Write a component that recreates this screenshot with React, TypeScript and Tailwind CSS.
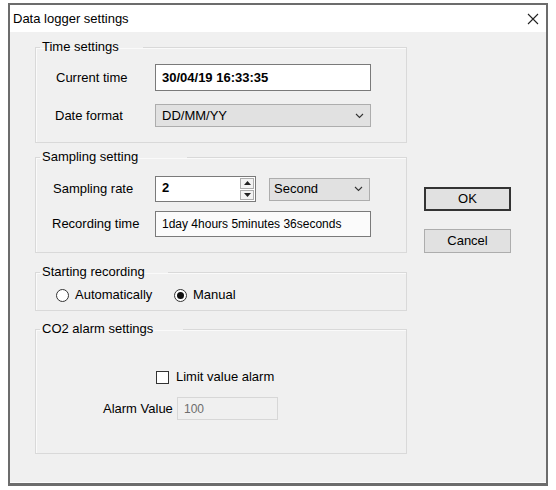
import React from 'react'

const font = { fontFamily: '"Liberation Sans", Arial, sans-serif' }

function Group({ title, legendW, className, children }: { title: string; legendW: string; className?: string; children: React.ReactNode }) {
  return (
    <fieldset className={`w-[372px] border border-[#d9d9d9] shadow-[inset_1px_1px_0_#fafafa] ${className ?? ''}`}>
      <legend className={`ml-[4px] pl-[2px] text-[13px] leading-[16px] text-black ${legendW}`}>{title}</legend>
      {children}
    </fieldset>
  )
}

function Chevron() {
  return (
    <svg width="9" height="6" viewBox="0 0 9 6" className="shrink-0">
      <polyline points="1,1 4.5,4.5 8,1" fill="none" stroke="#333" strokeWidth="1.1" />
    </svg>
  )
}

function Radio({ checked, label, className }: { checked?: boolean; label: string; className?: string }) {
  return (
    <div className={`flex items-center gap-[6px] ${className ?? ''}`}>
      <div className="w-[13px] h-[13px] rounded-full border border-[#333] bg-white flex items-center justify-center">
        {checked && <div className="w-[7px] h-[7px] rounded-full bg-[#111]" />}
      </div>
      <span className="text-[13px]">{label}</span>
    </div>
  )
}

export default function App() {
  return (
    <div className="w-[556px] h-[490px] bg-white pt-[3px] pl-[8px] text-black" style={font}>
      <div className="w-[540px] h-[483px] border-2 border-b-[3px] border-[#6c6c6c] flex flex-col">
        {/* title bar */}
        <div className="h-[27px] bg-white flex items-center justify-between pl-[3px] pr-[7px] shrink-0">
          <span className="text-[13px]">Data logger settings</span>
          <svg width="12" height="12" viewBox="0 0 12 12">
            <path d="M1 1 L11 11 M11 1 L1 11" stroke="#222" strokeWidth="1.1" />
          </svg>
        </div>

        {/* body */}
        <div className="flex-1 bg-[#f0f0f0] flex pl-[25px] pt-[7px] border-b border-[#fbfbfb]">
          <div className="flex flex-col">
            <Group title="Time settings" legendW="w-[103px]">
              <div className="flex flex-col pt-[9px] pb-[15px]">
                <div className="flex items-center">
                  <span className="w-[119px] pl-[20px] text-[13px]">Current time</span>
                  <div className="w-[216px] h-[27px] border border-[#7a7a7a] bg-white flex items-center pl-[6px] text-[13px] font-bold">
                    30/04/19 16:33:35
                  </div>
                </div>
                <div className="flex items-center mt-[13px]">
                  <span className="w-[119px] pl-[19px] text-[13px]">Date format</span>
                  <div className="w-[216px] h-[23px] border border-[#adadad] bg-[#e1e1e1] flex items-center justify-between pl-[6px] pr-[6px] text-[13px]">
                    <span>DD/MM/YY</span>
                    <Chevron />
                  </div>
                </div>
              </div>
            </Group>

            <Group title="Sampling setting" legendW="w-[147px]" className="mt-[6px]">
              <div className="flex flex-col pt-[11px] pb-[15px]">
                <div className="flex items-center">
                  <span className="w-[119px] pl-[17px] text-[13px]">Sampling rate</span>
                  <div className="w-[101px] h-[26px] border border-[#7a7a7a] bg-white flex items-stretch">
                    <span className="flex-1 pl-[6px] pt-[3px] text-[13px] font-bold leading-[16px]">2</span>
                    <div className="w-[15px] flex flex-col gap-[1px] py-[1px] pr-[1px]">
                      <div className="flex-1 border border-[#adadad] bg-[#f3f3f3] flex items-center justify-center">
                        <svg width="7" height="4" viewBox="0 0 7 4"><polygon points="0,4 3.5,0 7,4" fill="#222" /></svg>
                      </div>
                      <div className="flex-1 border border-[#adadad] bg-[#f3f3f3] flex items-center justify-center">
                        <svg width="7" height="4" viewBox="0 0 7 4"><polygon points="0,0 3.5,4 7,0" fill="#222" /></svg>
                      </div>
                    </div>
                  </div>
                  <div className="ml-[13px] w-[101px] h-[23px] border border-[#adadad] bg-[#e1e1e1] flex items-center justify-between pl-[4px] pr-[6px] text-[13px]">
                    <span>Second</span>
                    <Chevron />
                  </div>
                </div>
                <div className="flex items-center mt-[9px]">
                  <span className="w-[119px] pl-[16px] text-[13px]">Recording time</span>
                  <div className="w-[216px] h-[26px] border border-[#7a7a7a] bg-[#fbfbfb] flex items-center pl-[6px] text-[12px]">
                    1day 4hours 5minutes 36seconds
                  </div>
                </div>
              </div>
            </Group>

            <Group title="Starting recording" legendW="w-[128px]" className="mt-[11px]">
              <div className="flex items-center h-[30px] pl-[20px]">
                <Radio label="Automatically" className="w-[118px]" />
                <Radio label="Manual" checked />
              </div>
            </Group>

            <Group title="CO2 alarm settings" legendW="w-[143px]" className="mt-[10px]">
              <div className="flex flex-col pt-[32px] pb-[33px]">
                <div className="flex items-center h-[16px] pl-[120px] gap-[7px]">
                  <div className="w-[13px] h-[13px] border border-[#333] bg-white" />
                  <span className="text-[13px]">Limit value alarm</span>
                </div>
                <div className="flex items-center mt-[12px] pl-[67px]">
                  <span className="w-[74px] text-[13px]">Alarm Value</span>
                  <div className="w-[101px] h-[23px] border border-[#d7d7d7] bg-[#f0f0f0] flex items-center pl-[6px] text-[12px] text-[#6d6d6d]">
                    100
                  </div>
                </div>
              </div>
            </Group>
          </div>

          <div className="flex flex-col pt-[148px] ml-[17px]">
            <button className="w-[87px] h-[24px] border-2 border-[#333] bg-[#e1e1e1] text-[13px]">OK</button>
            <button className="w-[87px] h-[24px] mt-[18px] border border-[#adadad] bg-[#e1e1e1] text-[13px]">Cancel</button>
          </div>
        </div>
      </div>
    </div>
  )
}
